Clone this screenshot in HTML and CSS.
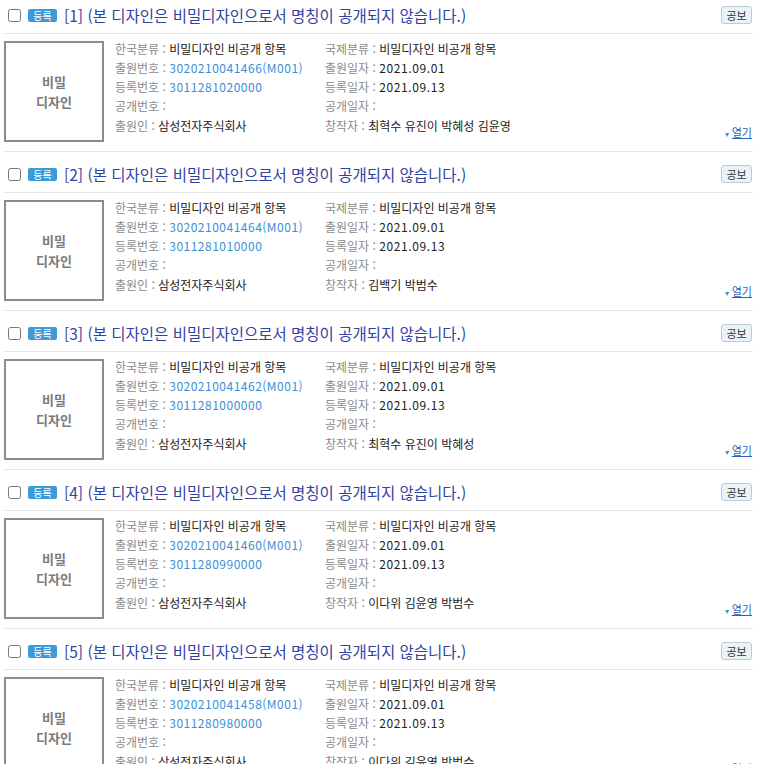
FILE: index.html
```html
<!DOCTYPE html>
<html lang="ko">
<head>
  <meta charset="UTF-8">
  <meta name="viewport" content="width=device-width, initial-scale=1.0">
  <title>디자인 검색 결과</title>
  <link rel="stylesheet" href="styles.css">
</head>
<body>

<div class="result-list">

  <div class="result-item">
    <div class="item-head">
      <input type="checkbox">
      <span class="badge">등록</span>
      <a href="#" class="item-title">[1] (본 디자인은 비밀디자인으로서 명칭이 공개되지 않습니다.)</a>
      <button class="btn-gazette">공보</button>
    </div>
    <div class="item-body">
      <div class="thumb">비밀<br>디자인</div>
      <div class="fields">
        <div><span class="lbl">한국분류 : </span><span class="val">비밀디자인 비공개 항목</span></div>
        <div><span class="lbl">국제분류 : </span><span class="val">비밀디자인 비공개 항목</span></div>
        <div><span class="lbl">출원번호 : </span><a href="#" class="num">3020210041466(M001)</a></div>
        <div><span class="lbl">출원일자 : </span><span class="val date">2021.09.01</span></div>
        <div><span class="lbl">등록번호 : </span><a href="#" class="num">3011281020000</a></div>
        <div><span class="lbl">등록일자 : </span><span class="val date">2021.09.13</span></div>
        <div><span class="lbl">공개번호 : </span></div>
        <div><span class="lbl">공개일자 : </span></div>
        <div><span class="lbl">출원인 : </span><span class="val">삼성전자주식회사</span></div>
        <div><span class="lbl">창작자 : </span><span class="val">최혁수 유진이 박혜성 김윤영</span></div>
      </div>
      <a href="#" class="toggle"><span class="arrow">&#9662;</span> <u>열기</u></a>
    </div>
  </div>

  <div class="result-item">
    <div class="item-head">
      <input type="checkbox">
      <span class="badge">등록</span>
      <a href="#" class="item-title">[2] (본 디자인은 비밀디자인으로서 명칭이 공개되지 않습니다.)</a>
      <button class="btn-gazette">공보</button>
    </div>
    <div class="item-body">
      <div class="thumb">비밀<br>디자인</div>
      <div class="fields">
        <div><span class="lbl">한국분류 : </span><span class="val">비밀디자인 비공개 항목</span></div>
        <div><span class="lbl">국제분류 : </span><span class="val">비밀디자인 비공개 항목</span></div>
        <div><span class="lbl">출원번호 : </span><a href="#" class="num">3020210041464(M001)</a></div>
        <div><span class="lbl">출원일자 : </span><span class="val date">2021.09.01</span></div>
        <div><span class="lbl">등록번호 : </span><a href="#" class="num">3011281010000</a></div>
        <div><span class="lbl">등록일자 : </span><span class="val date">2021.09.13</span></div>
        <div><span class="lbl">공개번호 : </span></div>
        <div><span class="lbl">공개일자 : </span></div>
        <div><span class="lbl">출원인 : </span><span class="val">삼성전자주식회사</span></div>
        <div><span class="lbl">창작자 : </span><span class="val">김백기 박범수</span></div>
      </div>
      <a href="#" class="toggle"><span class="arrow">&#9662;</span> <u>열기</u></a>
    </div>
  </div>

  <div class="result-item">
    <div class="item-head">
      <input type="checkbox">
      <span class="badge">등록</span>
      <a href="#" class="item-title">[3] (본 디자인은 비밀디자인으로서 명칭이 공개되지 않습니다.)</a>
      <button class="btn-gazette">공보</button>
    </div>
    <div class="item-body">
      <div class="thumb">비밀<br>디자인</div>
      <div class="fields">
        <div><span class="lbl">한국분류 : </span><span class="val">비밀디자인 비공개 항목</span></div>
        <div><span class="lbl">국제분류 : </span><span class="val">비밀디자인 비공개 항목</span></div>
        <div><span class="lbl">출원번호 : </span><a href="#" class="num">3020210041462(M001)</a></div>
        <div><span class="lbl">출원일자 : </span><span class="val date">2021.09.01</span></div>
        <div><span class="lbl">등록번호 : </span><a href="#" class="num">3011281000000</a></div>
        <div><span class="lbl">등록일자 : </span><span class="val date">2021.09.13</span></div>
        <div><span class="lbl">공개번호 : </span></div>
        <div><span class="lbl">공개일자 : </span></div>
        <div><span class="lbl">출원인 : </span><span class="val">삼성전자주식회사</span></div>
        <div><span class="lbl">창작자 : </span><span class="val">최혁수 유진이 박혜성</span></div>
      </div>
      <a href="#" class="toggle"><span class="arrow">&#9662;</span> <u>열기</u></a>
    </div>
  </div>

  <div class="result-item">
    <div class="item-head">
      <input type="checkbox">
      <span class="badge">등록</span>
      <a href="#" class="item-title">[4] (본 디자인은 비밀디자인으로서 명칭이 공개되지 않습니다.)</a>
      <button class="btn-gazette">공보</button>
    </div>
    <div class="item-body">
      <div class="thumb">비밀<br>디자인</div>
      <div class="fields">
        <div><span class="lbl">한국분류 : </span><span class="val">비밀디자인 비공개 항목</span></div>
        <div><span class="lbl">국제분류 : </span><span class="val">비밀디자인 비공개 항목</span></div>
        <div><span class="lbl">출원번호 : </span><a href="#" class="num">3020210041460(M001)</a></div>
        <div><span class="lbl">출원일자 : </span><span class="val date">2021.09.01</span></div>
        <div><span class="lbl">등록번호 : </span><a href="#" class="num">3011280990000</a></div>
        <div><span class="lbl">등록일자 : </span><span class="val date">2021.09.13</span></div>
        <div><span class="lbl">공개번호 : </span></div>
        <div><span class="lbl">공개일자 : </span></div>
        <div><span class="lbl">출원인 : </span><span class="val">삼성전자주식회사</span></div>
        <div><span class="lbl">창작자 : </span><span class="val">이다위 김윤영 박범수</span></div>
      </div>
      <a href="#" class="toggle"><span class="arrow">&#9662;</span> <u>열기</u></a>
    </div>
  </div>

  <div class="result-item">
    <div class="item-head">
      <input type="checkbox">
      <span class="badge">등록</span>
      <a href="#" class="item-title">[5] (본 디자인은 비밀디자인으로서 명칭이 공개되지 않습니다.)</a>
      <button class="btn-gazette">공보</button>
    </div>
    <div class="item-body">
      <div class="thumb">비밀<br>디자인</div>
      <div class="fields">
        <div><span class="lbl">한국분류 : </span><span class="val">비밀디자인 비공개 항목</span></div>
        <div><span class="lbl">국제분류 : </span><span class="val">비밀디자인 비공개 항목</span></div>
        <div><span class="lbl">출원번호 : </span><a href="#" class="num">3020210041458(M001)</a></div>
        <div><span class="lbl">출원일자 : </span><span class="val date">2021.09.01</span></div>
        <div><span class="lbl">등록번호 : </span><a href="#" class="num">3011280980000</a></div>
        <div><span class="lbl">등록일자 : </span><span class="val date">2021.09.13</span></div>
        <div><span class="lbl">공개번호 : </span></div>
        <div><span class="lbl">공개일자 : </span></div>
        <div><span class="lbl">출원인 : </span><span class="val">삼성전자주식회사</span></div>
        <div><span class="lbl">창작자 : </span><span class="val">이다위 김윤영 박범수</span></div>
      </div>
      <a href="#" class="toggle"><span class="arrow">&#9662;</span> <u>열기</u></a>
    </div>
  </div>

</div>

</body>
</html>
```

FILE: styles.css
```css
body {
  margin: 0;
  font-family: "Noto Sans CJK KR", "Noto Sans", sans-serif;
  background-color: #fff;
  color: #333;
  overflow: hidden;
}

/* list is scrolled a little, so the first head is cut at the top */
.result-list {
  margin: -7px 4px 0 3px;
}

.result-item {
  padding-left: 1px;
}

.item-head {
  display: flex;
  align-items: center;
  height: 36px;
  padding-top: 4px;
  border-bottom: 1px solid #e8e8e8;
}

.item-head input {
  width: 13px;
  height: 13px;
  margin: 0 3px 0 4px;
}

.badge {
  display: inline-block;
  width: 29px;
  height: 13px;
  line-height: 13px;
  margin-left: 4px;
  background-color: #3c9ad6;
  color: white;
  font-size: 10px;
  text-align: center;
  border-radius: 2px;
}

.item-title {
  margin-left: 7px;
  font-size: 15.5px;
  color: #3043a2;
  text-decoration: none;
  flex: 1;
}

.btn-gazette {
  width: 31px;
  height: 18px;
  padding: 0;
  margin-right: 1px;
  font-family: inherit;
  font-size: 11px;
  line-height: 16px;
  color: #333;
  background: #eaf3f8;
  border: 1px solid #b9cdd9;
  border-radius: 3px;
}

.item-body {
  display: flex;
  height: 117px;
  border-bottom: 1px solid #e8e8e8;
}

.thumb {
  box-sizing: border-box;
  width: 100px;
  height: 101px;
  margin-top: 7px;
  border: 2px solid #8c8c8c;
  display: flex;
  align-items: center;
  justify-content: center;
  text-align: center;
  font-size: 13px;
  font-weight: bold;
  line-height: 20px;
  color: #7a7a7a;
}

.fields {
  flex: 1;
  display: grid;
  grid-template-columns: 210px auto;
  align-content: start;
  padding: 4.5px 0 0 11px;
  font-size: 12px;
  line-height: 19.25px;
  white-space: nowrap;
}

.lbl {
  color: #8a8a8a;
}

.val {
  color: #222;
}

.date {
  letter-spacing: 0.6px;
}

.num {
  color: #3a8fd6;
  text-decoration: none;
  letter-spacing: 0.5px;
}

.toggle {
  align-self: flex-end;
  margin: 0 1px 10px 0;
  font-size: 11px;
  line-height: 14px;
  color: #2f5fb0;
  text-decoration: none;
}

.toggle .arrow {
  font-size: 8px;
  color: #3a8fd6;
}
```
